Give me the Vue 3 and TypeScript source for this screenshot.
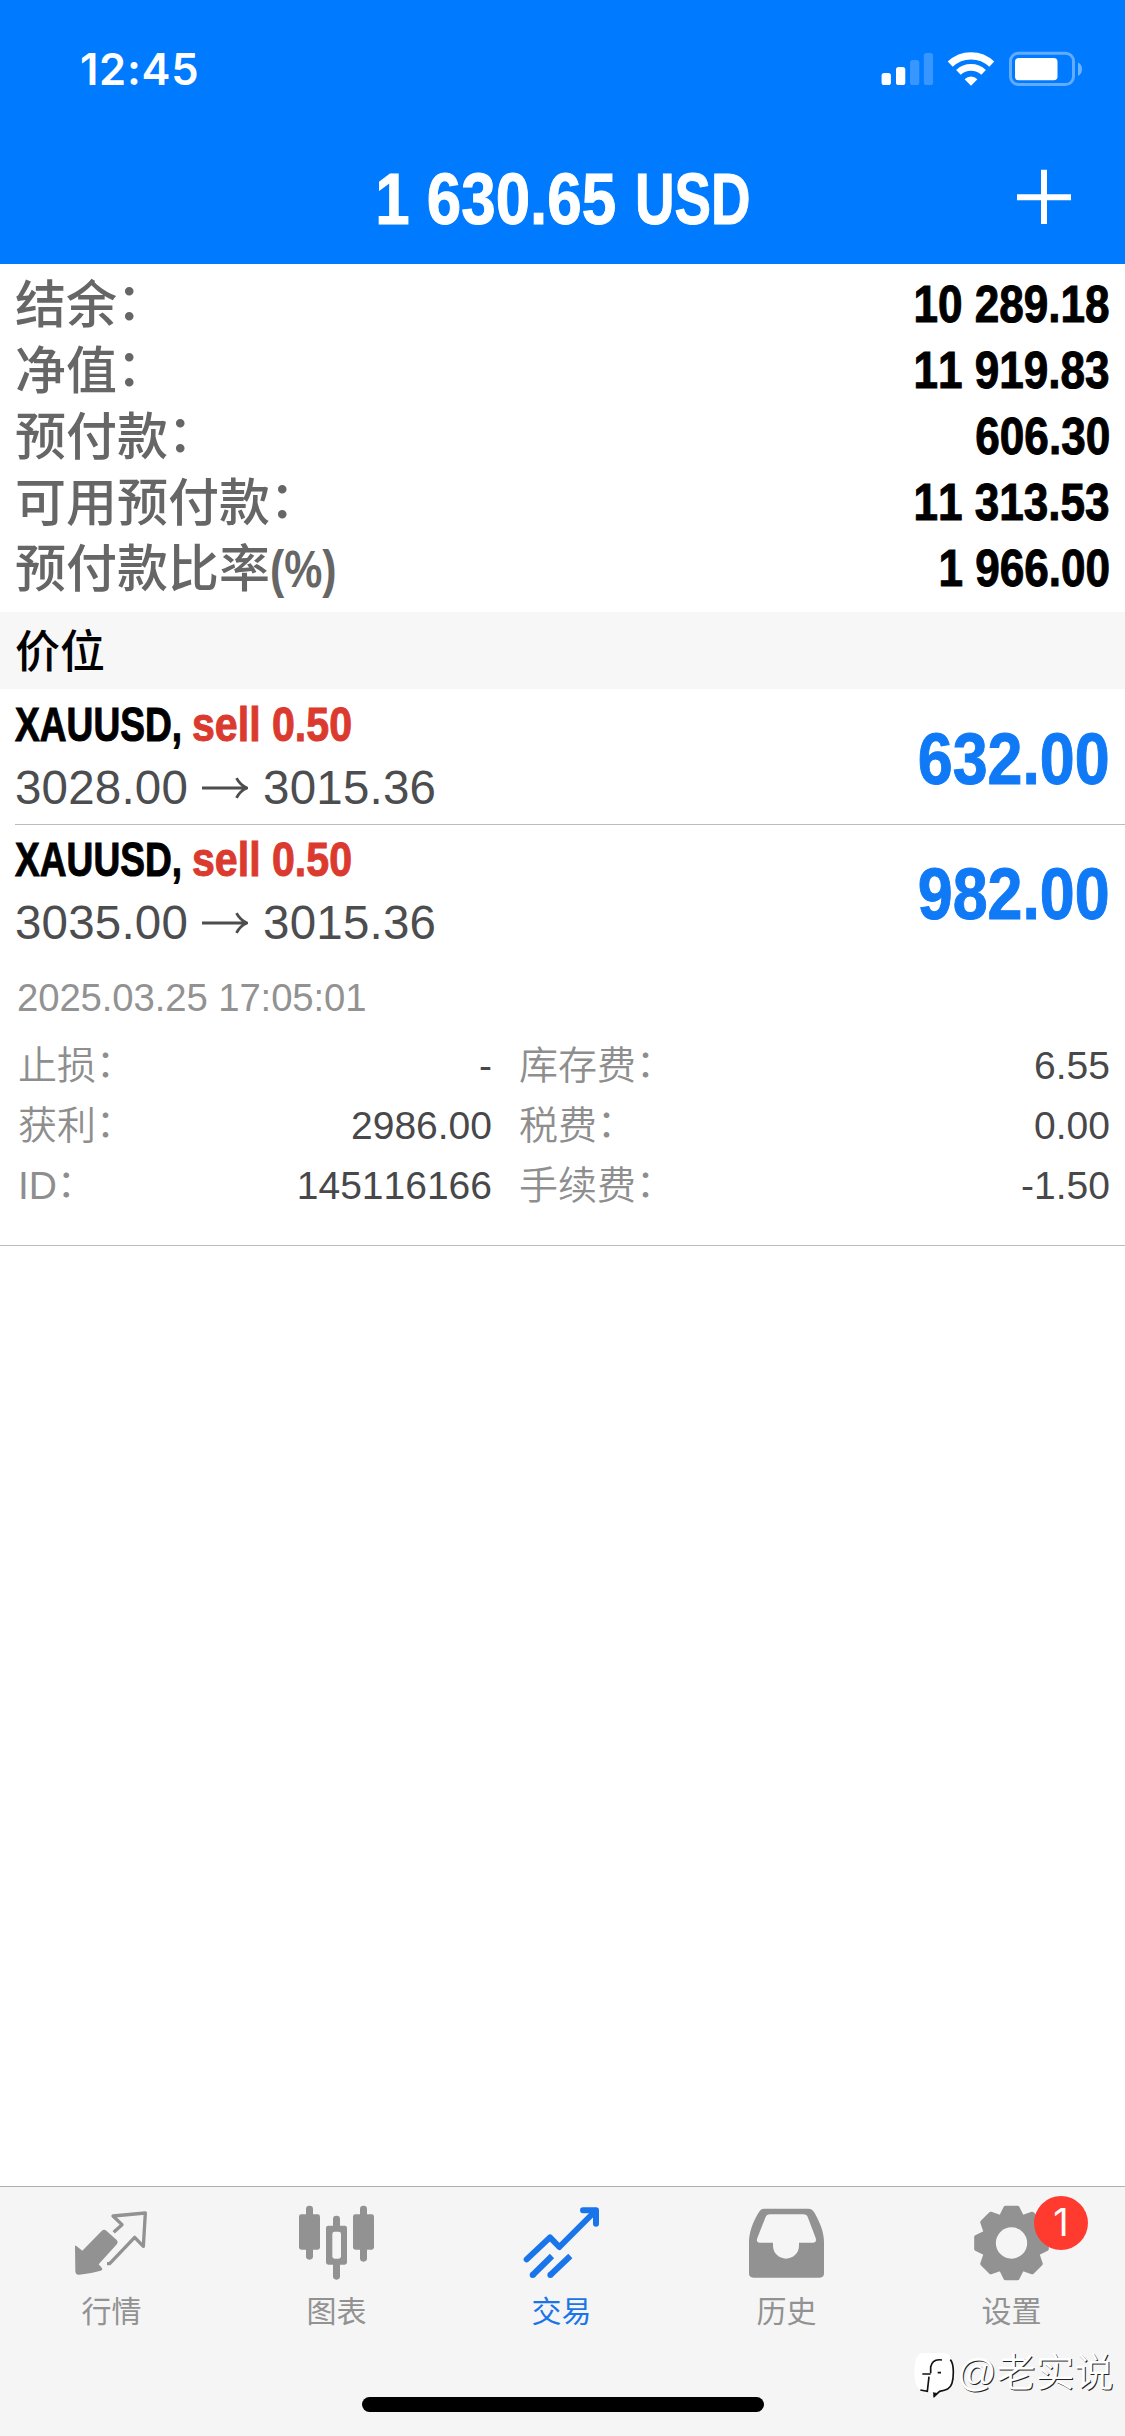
<script setup lang="ts">
interface SummaryRow { label: string; suffix: string; value: string }
interface Trade { symbol: string; side: string; open: string; current: string; profit: string }
interface Detail { label: string; value: string }
interface Tab { id: string; label: string; viewBox: string; active?: boolean; badge?: string }

const summary: SummaryRow[] = [
  { label: '结余', suffix: '：', value: '10 289.18' },
  { label: '净值', suffix: '：', value: '11 919.83' },
  { label: '预付款', suffix: '：', value: '606.30' },
  { label: '可用预付款', suffix: '：', value: '11 313.53' },
  { label: '预付款比率', suffix: '(%)', value: '1 966.00' },
]

const trades: Trade[] = [
  { symbol: 'XAUUSD,', side: 'sell 0.50', open: '3028.00', current: '3015.36', profit: '632.00' },
  { symbol: 'XAUUSD,', side: 'sell 0.50', open: '3035.00', current: '3015.36', profit: '982.00' },
]

const detailsLeft: Detail[] = [
  { label: '止损', value: '-' },
  { label: '获利', value: '2986.00' },
  { label: 'ID', value: '145116166' },
]
const detailsRight: Detail[] = [
  { label: '库存费', value: '6.55' },
  { label: '税费', value: '0.00' },
  { label: '手续费', value: '-1.50' },
]

const tabs: Tab[] = [
  { id: 'quotes', label: '行情', viewBox: '222 100 225 240' },
  { id: 'charts', label: '图表', viewBox: '897 100 225 240' },
  { id: 'trade', label: '交易', viewBox: '372 100 225 240', active: true },
  { id: 'history', label: '历史', viewBox: '1047 100 225 240' },
  { id: 'settings', label: '设置', viewBox: '372 100 225 240', badge: '1' },
]

// Eight-tooth gear outline: each tooth is a trapezoid from the body radius to the tip radius.
function gearPath(cx: number, cy: number): string {
  const pts: string[] = []
  for (let i = 0; i < 8; i++) {
    const a = (i * Math.PI) / 4
    const corners: [number, number][] = [[80, -31], [106, -18], [106, 18], [80, 31]]
    for (const [r, w] of corners) {
      const x = cx + r * Math.cos(a) - w * Math.sin(a)
      const y = cy + r * Math.sin(a) + w * Math.cos(a)
      pts.push(`${x.toFixed(1)},${y.toFixed(1)}`)
    }
  }
  return `M${pts.join('L')}Z`
}
const gear = gearPath(484.5, 220)
</script>

<template>
  <div class="screen">
    <header class="top">
      <div class="status">
        <span class="clock">12:45</span>
        <svg class="status-icons" width="204" height="38" viewBox="880 50 204 38">
          <g fill="#fff">
            <rect x="881.6" y="73" width="9.3" height="12" rx="2.6" />
            <rect x="896" y="67" width="9.3" height="18" rx="2.6" />
            <rect x="910" y="60" width="9.3" height="25" rx="2.6" opacity=".22" />
            <rect x="923.8" y="53" width="9.3" height="32" rx="2.6" opacity=".22" />
          </g>
          <g fill="none" stroke="#fff">
            <path d="M950.2 64.2A30 30 0 0 1 991.8 64.2" stroke-width="7.2" />
            <path d="M958.4 72.4A18.4 18.4 0 0 1 983.6 72.4" stroke-width="6.6" />
          </g>
          <path d="M971 85.8L964.6 79.2A9.2 9.2 0 0 1 977.4 79.2Z" fill="#fff" />
          <rect x="1010.5" y="53.2" width="63" height="31.4" rx="8" fill="none" stroke="#fff" stroke-opacity=".38" stroke-width="3" />
          <rect x="1015" y="58" width="42.5" height="22.2" rx="3.8" fill="#fff" />
          <path d="M1078 62.6C1083.4 64.6 1083.4 74 1078 76Z" fill="#fff" opacity=".42" />
        </svg>
      </div>
      <div class="title-bar">
        <h1 class="title"><span class="cond amount">1 630.65</span><span class="cond currency">USD</span></h1>
        <svg class="plus" width="56" height="56" viewBox="0 0 56 56">
          <path d="M1 28.2H55M28 .8V55" stroke="#fff" stroke-width="6" />
        </svg>
      </div>
    </header>

    <section class="summary">
      <div v-for="row in summary" :key="row.label" class="summary-row">
        <span class="summary-label">{{ row.label }}<span v-if="row.suffix === '：'" class="colon">：</span><span v-else class="cond unit">{{ row.suffix }}</span></span>
        <span class="cond summary-value">{{ row.value }}</span>
      </div>
    </section>

    <h2 class="band">价位</h2>

    <section>
      <article v-for="(t, i) in trades" :key="i" class="trade" :class="{ open: i === 1 }">
        <div class="trade-main">
          <div class="deal">
            <span class="cond symbol">{{ t.symbol }}</span>
            <span class="cond side">{{ t.side }}</span>
          </div>
          <div class="prices">
            <span>{{ t.open }}</span>
            <svg class="arrow" width="46" height="24" viewBox="0 0 46 24">
              <path d="M0 12H44M34.5 2.2Q38 9 45 12Q38 15 34.5 21.8" fill="none" stroke="#4c4d4f" stroke-width="2.8" />
            </svg>
            <span>{{ t.current }}</span>
          </div>
        </div>
        <span class="cond profit">{{ t.profit }}</span>
      </article>
      <div class="details">
        <time class="date">2025.03.25 17:05:01</time>
        <div class="columns">
          <dl class="col col-left">
            <div v-for="d in detailsLeft" :key="d.label" class="detail"><dt>{{ d.label }}<span class="colon">：</span></dt><dd>{{ d.value }}</dd></div>
          </dl>
          <dl class="col col-right">
            <div v-for="d in detailsRight" :key="d.label" class="detail"><dt>{{ d.label }}<span class="colon">：</span></dt><dd>{{ d.value }}</dd></div>
          </dl>
        </div>
      </div>
    </section>

    <nav class="tabbar">
      <div class="tabs">
        <div v-for="tab in tabs" :key="tab.id" class="tab" :class="{ active: tab.active }">
          <svg class="tab-icon" width="75" height="80" :viewBox="tab.viewBox">
            <g v-if="tab.id === 'quotes'">
              <path d="M305 184Q312 177 319 183L350 211Q356 217 351 223L296 284L305 294Q310 300 302 303Q272 312 238 315Q226 316 226 304L225 230Q225 226 229 229L247 243Z" fill="currentColor" />
              <path d="M341 188L366 165L339 139L436 130L430 230L404 203L329 282H321" fill="none" stroke="currentColor" stroke-width="10" stroke-linejoin="round" />
            </g>
            <g v-else-if="tab.id === 'charts'" fill="currentColor">
              <rect x="918" y="108" width="21" height="162" rx="10" />
              <rect x="897" y="134" width="63" height="106" rx="7" />
              <rect x="1080" y="108" width="21" height="168" rx="10" />
              <rect x="1059" y="134" width="63" height="106" rx="7" />
              <rect x="999" y="138" width="21" height="192" rx="10" />
              <rect x="978" y="168" width="63" height="117" rx="7" />
              <rect x="997" y="186" width="26" height="81" rx="7" fill="#f5f5f5" />
            </g>
            <g v-else-if="tab.id === 'trade'" fill="none" stroke="currentColor" stroke-width="18" stroke-linejoin="round">
              <path d="M380 269L450 203L478 232L586 124" stroke-linecap="round" />
              <path d="M549 122H588V162" stroke-linecap="round" />
              <path d="M565 122H588V146Z" fill="currentColor" stroke="none" />
              <path d="M398 316L456 259M451 316L511 259" />
              <path d="M398 316h.1M451 316h.1" stroke-linecap="round" />
            </g>
            <path v-else-if="tab.id === 'history'" fill="currentColor" fill-rule="evenodd" d="M1092 117H1225Q1237 117 1244 130C1263 165 1272 190 1272 218V311Q1272 324 1259 324H1060Q1047 324 1047 311V218C1047 190 1057 160 1075 130Q1082 117 1092 117ZM1110 134Q1100 134 1096 144L1072 205Q1067 219 1080 219H1119V228A39 39 0 0 0 1197 228V219H1238Q1251 219 1247 205L1224 144Q1220 134 1210 134Z" />
            <g v-else>
              <path :d="gear" fill="currentColor" stroke="currentColor" stroke-width="12" stroke-linejoin="round" />
              <circle cx="484.5" cy="220" r="47" fill="#f5f5f5" />
            </g>
          </svg>
          <span v-if="tab.badge" class="badge">{{ tab.badge }}</span>
          <span class="tab-label">{{ tab.label }}</span>
        </div>
      </div>
      <div class="home"></div>
      <div class="author">
        <svg width="42" height="46" viewBox="24 42 126 138">
          <path d="M52 42H118Q143 44 146 90Q149 142 112 156L90 172L84 158L64 158L44 152Q28 140 28 98Q28 44 52 42Z" fill="#fff" />
          <path d="M111 63Q82 58 77 84V103M72 113L67 157L46 153" fill="none" stroke="#111" stroke-width="5" />
          <path d="M52 105H77M98 101H108" stroke="#111" stroke-width="5" />
          <path d="M136 62Q145 72 145 100Q145 142 128 150Q120 154 104 157L86 173" fill="none" stroke="#111" stroke-width="5" />
          <path d="M84 160L86 177L100 163Z" fill="#111" />
        </svg>
        <span>@老实说</span>
      </div>
    </nav>
  </div>
</template>

<style>
body { background: #fff; }
</style>

<style scoped>
.screen {
  display: flex;
  flex-direction: column;
  width: 1125px;
  height: 2436px;
  overflow: hidden;
  background: #fff;
  font-family: "Liberation Sans", "Noto Sans CJK SC", sans-serif;
  font-kerning: none;
}
h1, h2, dl, dd { margin: 0; }

/* Bold condensed figures, squeezed horizontally from the regular width */
.cond {
  display: inline-block;
  font-weight: 700;
  white-space: nowrap;
  -webkit-text-stroke: 1px currentColor;
}
/* Full-width colon, raised to the middle of the ideographs */
.colon { display: inline-block; transform: translate(-0.01em, -0.06em); }

.top { flex: none; height: 264px; background: #007aff; color: #fff; }
.status { display: flex; justify-content: space-between; height: 132px; padding: 0 41px 0 80px; }
.clock { font: 600 43.5px/54px Inter, sans-serif; margin-top: 42px; letter-spacing: 0.7px; }
.status-icons { margin-top: 50px; }
.title-bar { display: flex; justify-content: space-between; height: 132px; padding: 0 53px 0 332px; }
.title { display: flex; gap: 19px; margin-top: 17px; font-size: 73px; line-height: 100px; }
.amount { transform: scaleX(0.848); transform-origin: right; }
.currency { transform: scaleX(0.75); transform-origin: left; }
.plus { margin-top: 37px; }

.summary { flex: none; padding: 7px 15px 11px; }
.summary-row { display: flex; justify-content: space-between; height: 66px; line-height: 66px; }
.summary-label { padding-top: 2px; font-size: 51px; font-weight: 500; color: #666; }
.unit { transform: scaleX(0.84); transform-origin: left; -webkit-text-stroke: 0; }
.summary-value { font-size: 51.4px; color: #000; transform: scaleX(0.858); transform-origin: right; }

.band {
  flex: none;
  box-sizing: border-box;
  height: 77px;
  padding: 4px 15px 0;
  background: #f7f7f7;
  font-size: 45px;
  font-weight: 500;
  line-height: 73px;
}

.trade {
  display: flex;
  justify-content: space-between;
  box-sizing: border-box;
  height: 136px;
  padding: 7px 15px 0 15px;
  border-bottom: 1px solid;
  border-image: linear-gradient(to right, transparent 16px, #bcbcbe 16px) 1;
}
.trade.open { height: 134px; padding-top: 6px; border-bottom: 0; }
.deal { display: flex; font-size: 48.6px; line-height: 56px; }
.symbol { flex: 0 0 177px; width: 177px; color: #000; transform: scaleX(0.764); transform-origin: left; }
.side { color: #db3a2f; transform: scaleX(0.846); transform-origin: left; }
.prices { display: flex; align-items: center; margin-top: 6px; font-size: 47.5px; line-height: 60px; color: #4c4d4f; letter-spacing: 0.2px; }
.arrow { margin: 0 15px 0 14px; }
.profit { margin-top: 13px; font-size: 72.8px; line-height: 100px; color: #0f79f6; transform: scaleX(0.862); transform-origin: right; }

.details { padding: 9px 0 29px; border-bottom: 1px solid #bcbcbe; }
.date { display: block; padding-left: 17px; font-size: 38.3px; line-height: 60px; color: #929292; letter-spacing: -0.1px; }
.columns { display: flex; gap: 27px; padding: 8px 15px 0 18px; font-size: 39px; }
.col-left { width: 474px; }
.col-right { flex: 1; }
.detail { display: flex; justify-content: space-between; height: 60px; line-height: 60px; }
dt { color: #8e8e8e; font-weight: 350; }
dd { color: #48484a; }

.tabbar {
  position: relative;
  flex: none;
  box-sizing: border-box;
  height: 250px;
  margin-top: auto;
  border-top: 1px solid #b0b0b0;
  background: #f5f5f5;
}
.tabs { display: flex; }
.tab {
  position: relative;
  display: flex;
  flex: 1;
  flex-direction: column;
  align-items: center;
  padding: 16px 2px 0 0;
  color: #929292;
}
.tab.active { color: #1a75ea; }
.tab-icon { overflow: visible; }
.tab-label { margin-top: 7px; font-size: 30px; line-height: 44px; }
.badge {
  position: absolute;
  top: 9px;
  left: 134px;
  width: 54px;
  height: 54px;
  border-radius: 50%;
  background: #ff3b30;
  color: #fff;
  font: 400 38px/53px Inter, sans-serif;
  text-align: center;
}
.home { width: 402px; height: 15px; margin: 63px auto 0; border-radius: 8px; background: #000; }
.author {
  position: absolute;
  top: 159px;
  left: 913px;
  display: flex;
  align-items: center;
  gap: 2px;
  color: #fff;
  font: 350 39px/54px "Liberation Sans", "Noto Sans CJK SC", sans-serif;
  text-shadow: 1px 1px 0 #222;
  white-space: nowrap;
}
.author svg { margin-top: 6px; }
</style>
